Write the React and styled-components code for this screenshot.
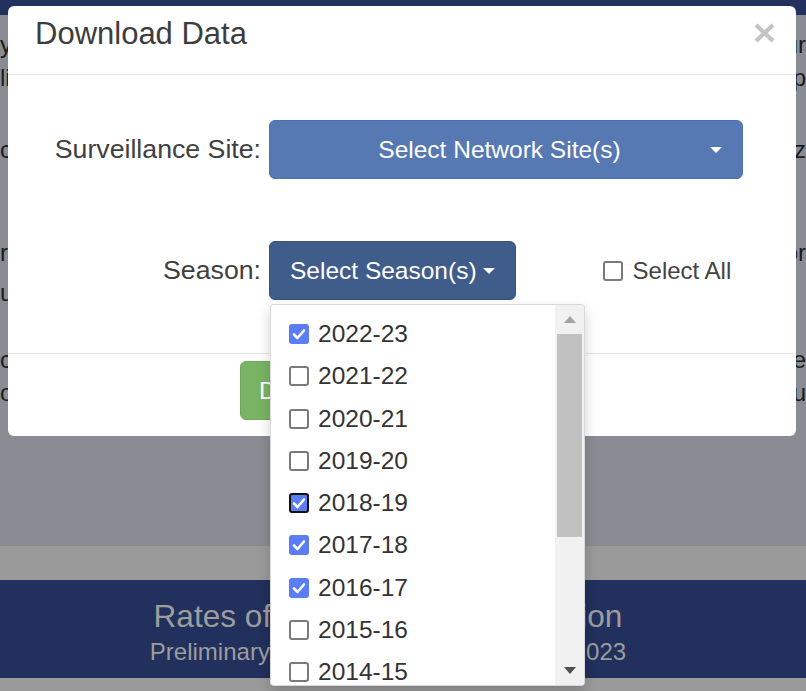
import React from 'react';
import styled, { createGlobalStyle } from 'styled-components';

const GlobalStyle = createGlobalStyle`
  html, body {
    margin: 0;
    padding: 0;
  }
  body {
    font-family: "Liberation Sans", Arial, sans-serif;
    background: #9a9a9a;
  }
  * {
    box-sizing: border-box;
  }
`;

const Page = styled.div`
  position: relative;
  height: 691px;
  overflow: hidden;
  display: flex;
  flex-direction: column;
`;

const TopBar = styled.div`
  height: 15px;
  background: #22315d;
`;

const Backdrop = styled.div`
  height: 531px;
  background: #898c92;
  overflow: hidden;
`;

const PageRow = styled.div`
  display: flex;
  justify-content: space-between;
  margin-top: ${p => p.$mt}px;
  height: 30px;
  line-height: 30px;
  font-size: 24px;
  color: #1c1c1c;
  white-space: nowrap;
`;

const GrayBand = styled.div`
  height: 34px;
  background: #9a9a9a;
`;

const Banner = styled.div`
  height: 98px;
  background: #21305c;
  color: #9d9d9d;
  text-align: center;
  padding: 18px 30px 0 0;
  h2 {
    margin: 0;
    font-size: 31.6px;
    line-height: 36px;
    font-weight: normal;
  }
  p {
    margin: 4px 0 0;
    font-size: 24px;
    line-height: 28px;
  }
`;

const BottomStrip = styled.div`
  flex: 1;
  background: #9a9a9a;
`;

const Modal = styled.div`
  position: absolute;
  top: 6px;
  left: 8px;
  width: 788px;
  background: #fff;
  border-radius: 6px;
  z-index: 10;
`;

const Header = styled.div`
  display: flex;
  justify-content: space-between;
  align-items: flex-start;
  padding: 11px 21px 23px 27px;
  border-bottom: 1px solid #e5e5e5;
  h4 {
    margin: 0;
    font-size: 31px;
    line-height: 34px;
    font-weight: normal;
    color: #3d3d3d;
  }
`;

const CloseButton = styled.button`
  margin-top: 6px;
  padding: 0;
  border: 0;
  background: none;
  cursor: pointer;
  display: block;
  svg {
    display: block;
  }
`;

const Body = styled.div`
  display: grid;
  grid-template-columns: 253px 1fr;
  column-gap: 8px;
  row-gap: 62px;
  align-items: center;
  padding: 45px 53px 53px 0;
`;

const Label = styled.label`
  text-align: right;
  font-size: 26.7px;
  color: #404040;
  white-space: nowrap;
`;

const Control = styled.div`
  display: flex;
  align-items: center;
`;

const Caret = styled.span`
  display: inline-block;
  width: 0;
  height: 0;
  border-top: 6px solid #fff;
  border-left: 6px solid transparent;
  border-right: 6px solid transparent;
`;

const NetworkButton = styled.button`
  width: 474px;
  height: 59px;
  display: flex;
  align-items: center;
  padding: 0 20px 0 19px;
  background: #5679b3;
  border: 1px solid #5072aa;
  border-radius: 6px;
  color: #fff;
  font-family: inherit;
  font-size: 24.5px;
  cursor: pointer;
  span.text {
    flex: 1;
    text-align: center;
  }
`;

const SeasonWrap = styled.div`
  position: relative;
`;

const SeasonButton = styled.button`
  height: 59px;
  display: flex;
  align-items: center;
  gap: 6px;
  padding: 0 20px;
  background: #405c8b;
  border: 1px solid #38527d;
  border-radius: 6px;
  color: #fff;
  font-family: inherit;
  font-size: 24.5px;
  cursor: pointer;
  white-space: nowrap;
`;

const SelectAll = styled.label`
  margin-left: 87px;
  display: flex;
  align-items: center;
  gap: 10px;
  font-size: 24px;
  color: #444;
`;

const Box = styled.span`
  flex: none;
  width: 20px;
  height: 20px;
  border-radius: 3px;
  display: flex;
  align-items: center;
  justify-content: center;
  background: ${p => (p.$checked ? '#5a7df5' : '#fff')};
  border: ${p => (p.$focused ? '2.5px solid #111' : p.$checked ? '0' : '2px solid #7a7a7a')};
  svg {
    display: block;
  }
`;

const Menu = styled.div`
  position: absolute;
  top: calc(100% + 4px);
  left: 1px;
  width: 315px;
  height: 382px;
  display: flex;
  background: #fff;
  border: 1px solid rgba(0, 0, 0, 0.15);
  border-radius: 4px;
  box-shadow: 0 6px 14px rgba(0, 0, 0, 0.18);
  overflow: hidden;
  z-index: 20;
`;

const SeasonList = styled.ul`
  flex: 1;
  margin: 0;
  padding: 8px 0 0;
  list-style: none;
  overflow: hidden;
`;

const SeasonItem = styled.li`
  height: 42.25px;
  display: flex;
  align-items: center;
  gap: 9px;
  padding-left: 18px;
  font-size: 24.5px;
  color: #333;
`;

const Scrollbar = styled.div`
  width: 29px;
  display: flex;
  flex-direction: column;
  background: #f1f1f1;
`;

const ArrowCell = styled.div`
  height: 29px;
  display: flex;
  align-items: center;
  justify-content: center;
  span {
    width: 0;
    height: 0;
    border-left: 6.5px solid transparent;
    border-right: 6.5px solid transparent;
    ${p => (p.$down
      ? 'border-top: 7px solid #505050;'
      : 'border-bottom: 7px solid #a3a3a3;')}
  }
`;

const Thumb = styled.div`
  height: 203px;
  margin: 0 2px;
  background: #c1c1c1;
`;

const Track = styled.div`
  flex: 1;
`;

const Footer = styled.div`
  border-top: 1px solid #e5e5e5;
  padding: 7px 0 16px 232px;
`;

const DownloadButton = styled.button`
  height: 59px;
  padding: 0 20px 0 18px;
  background: #79b465;
  border: 1px solid #6fa85b;
  border-radius: 6px;
  color: #fff;
  font-family: inherit;
  font-size: 24.5px;
  cursor: pointer;
`;

const pageRows = [
  { mt: 15, left: 'y', right: 'ur' },
  { mt: 3, left: 'li', right: 'op' },
  { mt: 42, left: 'c', right: 'nz' },
  { mt: 73, left: 'ri', right: 'or' },
  { mt: 10, left: 'u', right: '' },
  { mt: 37, left: 'c', right: 're' },
  { mt: 3, left: 'o', right: 'u' },
];

const seasons = [
  { name: '2022-23', checked: true },
  { name: '2021-22' },
  { name: '2020-21' },
  { name: '2019-20' },
  { name: '2018-19', checked: true, focused: true },
  { name: '2017-18', checked: true },
  { name: '2016-17', checked: true },
  { name: '2015-16' },
  { name: '2014-15' },
  { name: '2013-14' },
  { name: '2012-13' },
];

function Check({ checked, focused }) {
  return (
    <Box $checked={checked} $focused={focused}>
      {checked && (
        <svg width="16" height="16" viewBox="0 0 16 16">
          <polyline points="3,8.5 6.5,12 13,4.5" fill="none" stroke="#fff" strokeWidth="2.6" strokeLinecap="round" strokeLinejoin="round" />
        </svg>
      )}
    </Box>
  );
}

export default function App() {
  return (
    <Page>
      <GlobalStyle />
      <TopBar />
      <Backdrop>
        {pageRows.map((r, i) => (
          <PageRow key={i} $mt={r.mt}>
            <span>{r.left}</span>
            <span>{r.right}</span>
          </PageRow>
        ))}
      </Backdrop>
      <GrayBand />
      <Banner>
        <h2>Rates of Influenza Hospitalization</h2>
        <p>Preliminary data as of September 30th, 2023</p>
      </Banner>
      <BottomStrip />

      <Modal>
        <Header>
          <h4>Download Data</h4>
          <CloseButton aria-label="Close">
            <svg width="21" height="20" viewBox="0 0 21 20">
              <path d="M2 2 L19 18 M19 2 L2 18" stroke="#c4c4c4" strokeWidth="4.2" />
            </svg>
          </CloseButton>
        </Header>
        <Body>
          <Label>Surveillance Site:</Label>
          <Control>
            <NetworkButton>
              <span className="text">Select Network Site(s)</span>
              <Caret />
            </NetworkButton>
          </Control>
          <Label>Season:</Label>
          <Control>
            <SeasonWrap>
              <SeasonButton>
                Select Season(s) <Caret />
              </SeasonButton>
              <Menu>
                <SeasonList>
                  {seasons.map(s => (
                    <SeasonItem key={s.name}>
                      <Check checked={s.checked} focused={s.focused} />
                      <span>{s.name}</span>
                    </SeasonItem>
                  ))}
                </SeasonList>
                <Scrollbar>
                  <ArrowCell><span /></ArrowCell>
                  <Thumb />
                  <Track />
                  <ArrowCell $down><span /></ArrowCell>
                </Scrollbar>
              </Menu>
            </SeasonWrap>
            <SelectAll>
              <Check />
              Select All
            </SelectAll>
          </Control>
        </Body>
        <Footer>
          <DownloadButton>Download</DownloadButton>
        </Footer>
      </Modal>
    </Page>
  );
}
